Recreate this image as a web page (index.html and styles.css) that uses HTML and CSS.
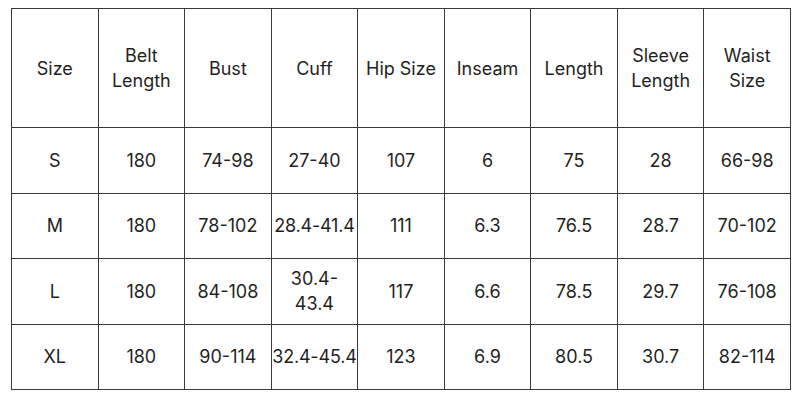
FILE: index.html
```html
<!DOCTYPE html>
<html>
<head>
<meta charset="utf-8">
<link rel="stylesheet" href="styles.css">
</head>
<body>
<table class="size-table">
  <thead>
    <tr class="head-row">
      <th>Size</th>
      <th>Belt<br>Length</th>
      <th>Bust</th>
      <th>Cuff</th>
      <th>Hip Size</th>
      <th>Inseam</th>
      <th>Length</th>
      <th>Sleeve<br>Length</th>
      <th>Waist<br>Size</th>
    </tr>
  </thead>
  <tbody>
    <tr><td>S</td><td>180</td><td>74-98</td><td>27-40</td><td>107</td><td>6</td><td>75</td><td>28</td><td>66-98</td></tr>
    <tr><td>M</td><td>180</td><td>78-102</td><td class="nowrap">28.4-41.4</td><td>111</td><td>6.3</td><td>76.5</td><td>28.7</td><td>70-102</td></tr>
    <tr><td>L</td><td>180</td><td>84-108</td><td>30.4-<br>43.4</td><td>117</td><td>6.6</td><td>78.5</td><td>29.7</td><td>76-108</td></tr>
    <tr><td>XL</td><td>180</td><td>90-114</td><td class="nowrap">32.4-45.4</td><td>123</td><td>6.9</td><td>80.5</td><td>30.7</td><td>82-114</td></tr>
  </tbody>
</table>
</body>
</html>
```

FILE: styles.css
```css
html, body {
  margin: 0;
  padding: 0;
  background: #ffffff;
}
body {
  padding: 8px 10px 0 11px;
}
.size-table {
  border-collapse: collapse;
  table-layout: fixed;
  width: 780px;
  height: 382px;
  font-family: Inter, "Liberation Sans", sans-serif;
  font-size: 18px;
  color: #1f1f1f;
}
.size-table th,
.size-table td {
  border: 1px solid #3a3a3a;
  text-align: center;
  vertical-align: middle;
  font-weight: 400;
  padding: 0;
  line-height: 25px;
}
.size-table .nowrap {
  white-space: nowrap;
  letter-spacing: -0.2px;
}
.head-row {
  height: 119px;
}
.size-table tbody tr {
  height: 65px;
}
```
